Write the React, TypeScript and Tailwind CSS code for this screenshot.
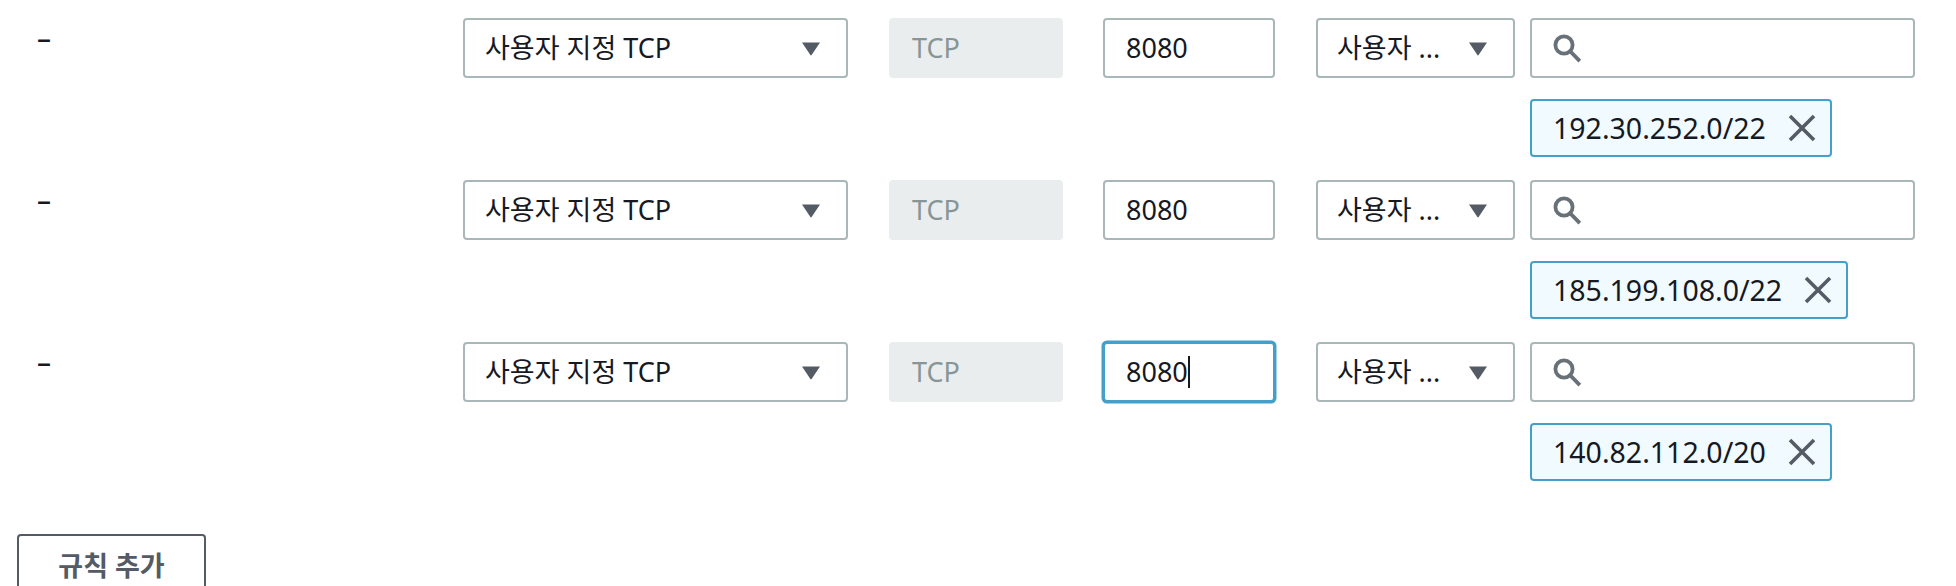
import React from 'react';

const font = { fontFamily: '"Noto Sans", "Noto Sans CJK KR", sans-serif' };

const rules = [
  { cidr: '192.30.252.0/22', focused: false },
  { cidr: '185.199.108.0/22', focused: false },
  { cidr: '140.82.112.0/20', focused: true },
];

const boxCN = 'flex h-[60px] items-center rounded-[4px] border-2 border-[#aab7b8] bg-white';

const Caret = () => (
  <svg width="20" height="15" viewBox="0 0 20 15" className="shrink-0">
    <path d="M1 1.5 L19 1.5 L10.6 14 Q10 14.8 9.4 14 Z" fill="#545b64" />
  </svg>
);

const SearchIcon = () => (
  <svg width="30" height="30" viewBox="0 0 30 30" fill="none" stroke="#687078" strokeWidth="3.8">
    <circle cx="12" cy="12" r="8.6" />
    <path d="M18.2 18.2 L26.5 26.8" strokeLinecap="square" />
  </svg>
);

const XIcon = () => (
  <svg width="28" height="28" viewBox="0 0 28 28" fill="none" stroke="#545b64" strokeWidth="3.6">
    <path d="M2 2 L26 26 M26 2 L2 26" />
  </svg>
);

const RuleRow = ({ cidr, focused }: { cidr: string; focused: boolean }) => (
  <div className="flex items-start">
    <div className="w-[446px] pl-[20px] text-[28px] font-medium leading-[40px] text-[#16191f]">–</div>

    <div className={`${boxCN} w-[385px] justify-between pl-[20px] pr-[25px]`}>
      <span className="text-[27px] text-[#16191f]">사용자 지정 TCP</span>
      <Caret />
    </div>

    <div className="ml-[41px] flex h-[60px] w-[174px] items-center rounded-[4px] bg-[#eaeded] pl-[23px] text-[27px] text-[#879596]">
      TCP
    </div>

    {focused ? (
      <div className="ml-[40px] flex h-[60px] w-[172px] items-center rounded-[4px] border-2 border-[#44a0c8] bg-white pl-[21px] shadow-[0_0_0_1.5px_#44a0c8]">
        <span className="text-[27px] text-[#16191f]">8080</span>
        <span className="h-[32px] w-[2px] bg-[#16191f]" />
      </div>
    ) : (
      <div className={`${boxCN} ml-[40px] w-[172px] pl-[21px]`}>
        <span className="text-[27px] text-[#16191f]">8080</span>
      </div>
    )}

    <div className={`${boxCN} ml-[41px] w-[199px] justify-between pl-[19px] pr-[25px]`}>
      <span className="text-[27px] text-[#16191f]">사용자 ...</span>
      <Caret />
    </div>

    <div className="ml-[15px] flex w-[385px] flex-col items-start">
      <div className={`${boxCN} w-[385px] pl-[20px]`}>
        <SearchIcon />
      </div>
      <div className="mt-[21px] flex h-[58px] items-center rounded-[4px] border-2 border-[#44a0c8] bg-[#f1faff] pl-[21px] pr-[14px]">
        <span className="text-[28.5px] text-[#16191f]">{cidr}</span>
        <span className="ml-[22px] flex">
          <XIcon />
        </span>
      </div>
    </div>
  </div>
);

const App = () => {
  return (
    <div className="h-[586px] overflow-hidden bg-white pl-[17px] pt-[18px]" style={font}>
      <div className="flex flex-col gap-[23px]">
        {rules.map((r) => (
          <RuleRow key={r.cidr} cidr={r.cidr} focused={r.focused} />
        ))}
      </div>
      <button className="mt-[53px] flex h-[64px] w-[189px] items-center justify-center rounded-[4px] border-2 border-[#545b64] bg-white text-[27px] font-bold text-[#545b64]">
        규칙 추가
      </button>
    </div>
  );
};

export default App;
